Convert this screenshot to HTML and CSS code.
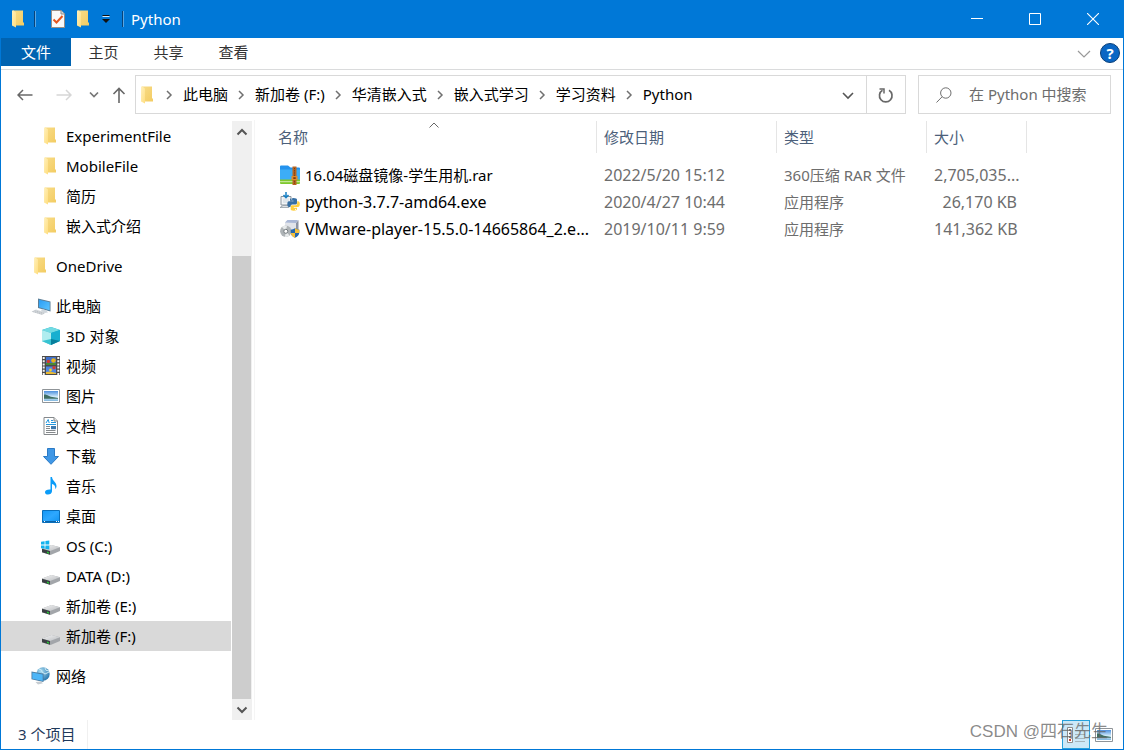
FILE: index.html
```html
<!DOCTYPE html>
<html lang="zh-CN">
<head>
<meta charset="utf-8">
<title>Python</title>
<link rel="stylesheet" href="styles.css">
</head>
<body>
<svg class="defs" aria-hidden="true">
  <defs>
    <linearGradient id="g-folder" x1="0" y1="0" x2="1" y2="1"><stop offset="0" stop-color="#f8dc88"/><stop offset="1" stop-color="#f3cc62"/></linearGradient>
    <linearGradient id="g-flap" x1="0" y1="0" x2="1" y2="1"><stop offset="0" stop-color="#fff0bd"/><stop offset="1" stop-color="#ffde7e"/></linearGradient>
    <linearGradient id="g-screen" x1="0" y1="0" x2="1" y2="1"><stop offset="0" stop-color="#2a9df4"/><stop offset="1" stop-color="#5cc4ff"/></linearGradient>
    <linearGradient id="g-drive" x1="0" y1="0" x2="1" y2="1"><stop offset="0" stop-color="#f4f4f4"/><stop offset="1" stop-color="#b9bcc0"/></linearGradient>
    <linearGradient id="g-photo" x1="0" y1="0" x2="0" y2="1"><stop offset="0" stop-color="#4c8fdd"/><stop offset=".6" stop-color="#d9effb"/><stop offset="1" stop-color="#7fb6df"/></linearGradient>
    <linearGradient id="g-desk" x1="0" y1="0" x2="1" y2="1"><stop offset="0" stop-color="#1397f5"/><stop offset=".5" stop-color="#2ea8ff"/><stop offset="1" stop-color="#0f92f0"/></linearGradient>
    <radialGradient id="g-globe" cx=".35" cy=".3" r=".8"><stop offset="0" stop-color="#a9dcf2"/><stop offset="1" stop-color="#1f6fa8"/></radialGradient>
  </defs>
  <symbol id="folder" viewBox="0 0 18 18">
    <path d="M4 0.5H14V12.5H15V15.5H4Z" fill="url(#g-folder)"/>
    <path d="M3 0.5H4.5L7 2.5V17.5L3 15.5Z" fill="url(#g-flap)"/>
  </symbol>
  <symbol id="pc" viewBox="0 0 20 18">
    <path d="M7 0.5L19.5 3.5V13.5L7 10Z" fill="#5b7d96"/>
    <path d="M8 1.7L18.7 4.2V12.2L8 9.2Z" fill="url(#g-screen)"/>
    <path d="M11 11L15 12.2L17 14.5L13 15L10 13Z" fill="#cfd6dc"/>
    <path d="M0.5 13.5L5 11.5L15 14.5L11 17Z" fill="#d5d9dd"/>
    <path d="M1.5 13.6L11.5 16.2M3.5 12.7L13 15.3" stroke="#a9b0b6" stroke-width=".6" stroke-dasharray="1.5 .6"/>
  </symbol>
  <symbol id="cube" viewBox="0 0 18 18">
    <path d="M9 0L18 3V14L9 18L0 14V3Z" fill="#19a9c6"/>
    <path d="M9 0L18 3L9 6L0 3Z" fill="#72dbe3"/>
    <path d="M0 3L9 6V18L0 14Z" fill="#b0edef"/>
    <path d="M0 14L9 12V18Z" fill="#37c3d1"/>
    <path d="M9 6L18 3V14L9 12Z" fill="#18afd0"/>
    <path d="M9 12L18 14L9 18Z" fill="#077f9c"/>
  </symbol>
  <symbol id="video" viewBox="0 0 18 19">
    <path d="M0 0H18V19H0Z" fill="#4b4b4b"/>
    <path d="M1.7 1V19M16.3 1V19" stroke="#f5f5f5" stroke-width="2" stroke-dasharray="2 1.2"/>
    <path d="M4 1H14V9H4Z" fill="#3f70cb"/><path d="M4 10.5H14V18H4Z" fill="#4f86e3"/>
    <circle cx="6.3" cy="5.5" r="1.8" fill="#d23c2e"/><circle cx="11.5" cy="4.5" r="2.3" fill="#e8b01d"/>
    <path d="M4 7H14V9H4Z" fill="#4b8b35"/><circle cx="12" cy="11.8" r="1.7" fill="#d23c2e"/>
    <circle cx="8.5" cy="14" r="1.4" fill="#f4cf28"/><path d="M4 16L8 15.5L14 17V18H4Z" fill="#eab932"/>
  </symbol>
  <symbol id="picture" viewBox="0 0 18 14">
    <path d="M.5 .5H17.5V13.5H.5Z" fill="#fff" stroke="#8f9498"/>
    <path d="M2 2H16V12H2Z" fill="url(#g-photo)"/>
    <path d="M2 5.5C5 5 7 8 12 8.2L16 9V9.8H2Z" fill="#3f6e62"/>
  </symbol>
  <symbol id="document" viewBox="0 0 16 18">
    <path d="M1 .5H11L14.5 4V17.5H1Z" fill="#fff" stroke="#85898c"/>
    <path d="M11 .5V4H14.5" fill="#e4e4e4" stroke="#85898c"/>
    <path d="M3 6L5.2 2.5L6.2 6M8 3.5H10M8 5.5H13M3 7.5H13" fill="none" stroke="#2296dd"/>
    <path d="M3 9.5H7M3 11.5H7M3 13.5H12.5M3 15.5H12.5" stroke="#85898c"/>
    <path d="M8 9H13V12.2H8Z" fill="#3c78ad"/>
  </symbol>
  <symbol id="download" viewBox="0 0 16 17">
    <path d="M4.5 .5H11.5V8.5H15.5L8 16.3L.5 8.5H4.5Z" fill="#3f97e6" stroke="#2b7ac5"/>
  </symbol>
  <symbol id="music" viewBox="0 0 12 18">
    <path d="M5.5 0H7C7.2 4 11.5 5 11.5 9C11.5 10.3 11 11.3 10.3 12C10.7 9 9 7.5 7 7V14.2C7 16.2 5 17.5 3 17.5C1.3 17.5 0 16.6 0 15.2C0 13.4 2.2 12.3 5.5 12.6Z" fill="#0b9cf8"/>
  </symbol>
  <symbol id="desktop" viewBox="0 0 18 13">
    <path d="M.5 .5H17.5V12.5H.5Z" fill="url(#g-desk)" stroke="#0a6fbb"/>
    <path d="M1 11.5H17" stroke="#0b62a6"/><path d="M2 11.5H3M14 11.5H15M16 11.5H17" stroke="#fff"/>
  </symbol>
  <symbol id="drive" viewBox="0 0 20 16">
    <path d="M1 8.5L10.5 5L19 7.2V11L9.5 15L1 12.3Z" fill="#a3a6aa"/>
    <path d="M1 8.5L10.5 5L19 7.2L9 11Z" fill="url(#g-drive)"/>
    <path d="M1 8.7L9 11V14.8L1 12.3Z" fill="#3b3f43"/>
    <path d="M6 11.5L8 12.2V13.7L6 13.1Z" fill="#27c934"/>
  </symbol>
  <symbol id="winlogo" viewBox="0 0 20 16">
    <path d="M0 1.7L3.6 1.2V4.6H0ZM4.4 1.1L8.3 .5V4.6H4.4ZM0 5.4H3.6V8.8L0 8.3ZM4.4 5.4H8.3V9.4L4.4 8.9Z" fill="#12b3ee"/>
  </symbol>
  <symbol id="network" viewBox="0 0 20 18">
    <circle cx="12" cy="7" r="6.7" fill="url(#g-globe)"/>
    <path d="M8 2Q12 3 11 5L14 7L18 5M14 1Q14 4 18 4" fill="none" stroke="#cdebf6" stroke-width="1"/>
    <path d="M.5 4.5L12.5 6.7V15L.5 12.3Z" fill="#47779d"/><path d="M1.3 5.4L11.7 7.4V14L1.3 11.7Z" fill="#4db6f7"/>
    <path d="M4.5 15L10 14.6L12 16.2L7 17.5Z" fill="#c6ccd1"/>
  </symbol>
  <symbol id="rar" viewBox="0 0 20 20">
    <path d="M0 1.5Q0 .5 1 .5H8L10.5 2.5H19Q20 2.5 20 3.5V18H0Z" fill="#2493ee"/>
    <path d="M0 4.5H20V15H0Z" fill="#3cadf7"/>
    <path d="M0 14.5H20V18Q20 19 19 19H1Q0 19 0 18Z" fill="#7ec82e"/>
    <path d="M0 16.7H20" stroke="#e9f5cf" stroke-width=".8"/>
    <path d="M12.5 1.5H16.5V20H12.5Z" fill="#b86420"/><path d="M14.5 3V19" stroke="#703b16" stroke-dasharray="1.2 1"/>
    <path d="M11.5 11H17.5V15H11.5Z" fill="#e08b2d"/><path d="M13.3 12.2H15.7V14H13.3Z" fill="#7a3b12"/>
  </symbol>
  <symbol id="pyexe" viewBox="0 0 20 20">
    <path d="M1 4.5H11V13H1Z" fill="#f2f4f6" stroke="#8a949d"/><path d="M3 6.5H9V11H3Z" fill="#dfe5ea"/>
    <path d="M0 15.5L3 13.5H9V15.5Z" fill="#dfe2e5" stroke="#8a949d" stroke-width=".7"/>
    <path d="M6 0V5.5M3.5 3L6 5.7L8.5 3" fill="none" stroke="#167fc3" stroke-width="1.5"/>
    <path d="M10 7.5Q10 6 13.5 6T17 7.7V11Q17 12.5 15.5 12.5H11.5Q10.5 12.5 10.5 15H9Q7.3 15 7.3 12T9 9.3H13.5V8.7H10Z" fill="#376fa3"/>
    <path d="M17.2 9.3H18Q19.8 9.3 19.8 12.3T18 15H13.8V15.7H17V17Q17 18.7 13.7 18.7T10.7 17V14.4Q10.7 13.2 12 13.2H15.5Q17.2 13.2 17.2 11Z" fill="#ffcf3e"/>
    <path d="M11.2 7H12.2M15 17.4H16" stroke="#fff"/>
  </symbol>
  <symbol id="setup" viewBox="0 0 20 20">
    <path d="M5 3.5L7.5 1H18L16 4V14H5Z" fill="#e1e4ea"/><path d="M16 4L18.5 1V14H16Z" fill="#8b93a3"/><path d="M5 3.5L7.5 1H18L16 4Z" fill="#aab8d6"/>
    <circle cx="5.8" cy="12.3" r="5.7" fill="#aeb3b6"/><path d="M5.8 12.3L2 8.1A5.7 5.7 0 0 1 7 6.7ZM5.8 12.3L9.5 16.6A5.7 5.7 0 0 1 5 17.9Z" fill="#e8ebec"/>
    <circle cx="5.8" cy="12.3" r="2" fill="#fff" stroke="#737a7e"/>
    <path d="M15 9.3Q16.7 10.7 19.3 10.7V13.2Q19.3 17 15 18.8Q10.7 17 10.7 13.2V10.7Q13.3 10.7 15 9.3Z" fill="#2466ad"/>
    <path d="M15 9.3Q16.7 10.7 19.3 10.7V14H15ZM10.8 14H15V18.8Q11.2 17.2 10.8 14Z" fill="#f4bf3b"/>
  </symbol>
  <symbol id="sep-chev" viewBox="0 0 16 16"><path d="M6 4L10 8L6 12" fill="none" stroke="#707070" stroke-width="1.5"/></symbol>
  <symbol id="down" viewBox="0 0 16 16"><path d="M3 6L8 11L13 6" fill="none" stroke="currentColor" stroke-width="1.6"/></symbol>
</svg>

<div class="window">
  <header class="titlebar">
    <svg class="i18"><use href="#folder"/></svg>
    <span class="tsep"></span>
    <button class="quick props" aria-label="属性"><svg width="14" height="18" viewBox="0 0 14 18"><path d="M.5 .5H10L13.5 4V17.5H.5Z" fill="#fafafa" stroke="#9b8e86"/><path d="M10 .5V4H13.5" fill="#ddd" stroke="#8b8b8b"/><path d="M2.5 9.5L5.5 12.5L11.5 6" fill="none" stroke="#e6551e" stroke-width="2"/></svg></button>
    <button class="quick" aria-label="新建文件夹"><svg class="i18"><use href="#folder"/></svg></button>
    <button class="quick" aria-label="自定义快速访问工具栏"><svg width="8" height="8" viewBox="0 0 8 8"><path d="M.5 .5H7.5" stroke="#111"/><path d="M.5 1.5H7.5" stroke="#d7e8f7"/><path d="M0 4H8L4 8Z" fill="#111"/></svg></button>
    <span class="tsep"></span>
    <h1 class="title">Python</h1>
    <div class="controls">
      <button aria-label="最小化"><svg width="12" height="12"><path d="M0 5.5H12" stroke="#fff"/></svg></button>
      <button aria-label="最大化"><svg width="12" height="12"><path d="M.5 .5H11.5V11.5H.5Z" fill="none" stroke="#fff"/></svg></button>
      <button aria-label="关闭"><svg width="12" height="12"><path d="M0 0L12 12M12 0L0 12" stroke="#fff" stroke-width="1.1"/></svg></button>
    </div>
  </header>

  <nav class="ribbon" aria-label="功能区">
    <button class="tab file">文件</button>
    <button class="tab">主页</button>
    <button class="tab">共享</button>
    <button class="tab">查看</button>
    <span class="grow"></span>
    <button class="expand" aria-label="展开功能区"><svg width="14" height="8"><path d="M1 1L7 7L13 1" fill="none" stroke="#999" stroke-width="1.2"/></svg></button>
    <button class="help" aria-label="帮助">?</button>
  </nav>

  <div class="addressrow">
    <div class="navbtns">
      <button aria-label="后退"><svg width="16" height="16"><path d="M1 8H15.5M6 3L1 8L6 13" fill="none" stroke="#686868" stroke-width="1.5"/></svg></button>
      <button aria-label="前进" disabled><svg width="16" height="16"><path d="M.5 8H15M10 3L15 8L10 13" fill="none" stroke="#d6d6d6" stroke-width="1.5"/></svg></button>
      <button class="recent" aria-label="最近浏览的位置"><svg width="10" height="8"><path d="M1 1.5L5 5.5L9 1.5" fill="none" stroke="#777" stroke-width="1.7"/></svg></button>
      <button class="up" aria-label="上移"><svg width="14" height="16"><path d="M7 16V1.5M1.5 7L7 1.5L12.5 7" fill="none" stroke="#686868" stroke-width="1.6"/></svg></button>
    </div>
    <div class="address">
      <svg class="i18"><use href="#folder"/></svg>
      <svg class="chev"><use href="#sep-chev"/></svg><button class="crumb">此电脑</button>
      <svg class="chev"><use href="#sep-chev"/></svg><button class="crumb">新加卷 (F:)</button>
      <svg class="chev"><use href="#sep-chev"/></svg><button class="crumb">华清嵌入式</button>
      <svg class="chev"><use href="#sep-chev"/></svg><button class="crumb">嵌入式学习</button>
      <svg class="chev"><use href="#sep-chev"/></svg><button class="crumb">学习资料</button>
      <svg class="chev"><use href="#sep-chev"/></svg><button class="crumb">Python</button>
      <span class="grow"></span>
      <button class="drop" aria-label="以前的位置"><svg width="16" height="16"><use href="#down"/></svg></button>
      <button class="refresh" aria-label="刷新"><svg width="16" height="16"><path d="M11 3.2A6.3 6.3 0 1 1 4.5 3.2" fill="none" stroke="#686868" stroke-width="1.7"/><path d="M1.5 2H6V6.5" fill="none" stroke="#686868" stroke-width="1.5"/></svg></button>
    </div>
    <label class="search">
      <svg width="16" height="16"><circle cx="9.8" cy="6" r="5.2" fill="none" stroke="#707070"/><path d="M6.2 9.7L.5 15.5" stroke="#707070"/></svg>
      <input type="text" placeholder="在 Python 中搜索" aria-label="在 Python 中搜索">
    </label>
  </div>

  <div class="body">
    <aside class="tree">
      <ul>
        <li class="sub"><a href="#"><svg class="ic"><use href="#folder" y="1" width="18" height="18"/></svg>ExperimentFile</a></li>
        <li class="sub"><a href="#"><svg class="ic"><use href="#folder" y="1" width="18" height="18"/></svg>MobileFile</a></li>
        <li class="sub"><a href="#"><svg class="ic"><use href="#folder" y="1" width="18" height="18"/></svg>简历</a></li>
        <li class="sub"><a href="#"><svg class="ic"><use href="#folder" y="1" width="18" height="18"/></svg>嵌入式介绍</a></li>
        <li class="group"><a href="#"><svg class="ic"><use href="#folder" y="1" width="18" height="18"/></svg>OneDrive</a></li>
        <li class="group"><a href="#"><svg class="ic"><use href="#pc" y="2" width="20" height="18"/></svg>此电脑</a></li>
        <li class="sub"><a href="#"><svg class="ic"><use href="#cube" x="1" y="1" width="18" height="18"/></svg>3D 对象</a></li>
        <li class="sub"><a href="#"><svg class="ic"><use href="#video" x="1" width="18" height="19"/></svg>视频</a></li>
        <li class="sub"><a href="#"><svg class="ic"><use href="#picture" x="1" y="3" width="18" height="14"/></svg>图片</a></li>
        <li class="sub"><a href="#"><svg class="ic"><use href="#document" x="2" y="1" width="16" height="18"/></svg>文档</a></li>
        <li class="sub"><a href="#"><svg class="ic"><use href="#download" x="2" y="2" width="16" height="17"/></svg>下载</a></li>
        <li class="sub"><a href="#"><svg class="ic"><use href="#music" x="4" y="1" width="12" height="18"/></svg>音乐</a></li>
        <li class="sub"><a href="#"><svg class="ic"><use href="#desktop" x="1" y="4" width="18" height="13"/></svg>桌面</a></li>
        <li class="sub"><a href="#"><svg class="ic"><use href="#drive" y="4" width="20" height="16"/><use href="#winlogo" y="4" width="20" height="16"/></svg>OS (C:)</a></li>
        <li class="sub"><a href="#"><svg class="ic"><use href="#drive" y="4" width="20" height="16"/></svg>DATA (D:)</a></li>
        <li class="sub"><a href="#"><svg class="ic"><use href="#drive" y="4" width="20" height="16"/></svg>新加卷 (E:)</a></li>
        <li class="sub selected"><a href="#" aria-current="true"><svg class="ic"><use href="#drive" y="4" width="20" height="16"/></svg>新加卷 (F:)</a></li>
        <li class="group"><a href="#"><svg class="ic"><use href="#network" y="1" width="20" height="18"/></svg>网络</a></li>
      </ul>
    </aside>
    <div class="scrollbar">
      <button aria-label="向上滚动"><svg width="12" height="8"><path d="M1.5 6.5L6 2L10.5 6.5" fill="none" stroke="#555" stroke-width="2"/></svg></button>
      <div class="track"><div class="thumb"></div></div>
      <button aria-label="向下滚动"><svg width="12" height="8"><path d="M1.5 1.5L6 6L10.5 1.5" fill="none" stroke="#555" stroke-width="2"/></svg></button>
    </div>
    <main class="files">
      <table>
        <colgroup><col class="c-name"><col class="c-date"><col class="c-type"><col class="c-size"></colgroup>
        <thead>
          <tr><th><svg class="sort" width="10" height="6"><path d="M.5 5.5L5 1L9.5 5.5" fill="none" stroke="#666"/></svg>名称</th><th>修改日期</th><th>类型</th><th>大小</th></tr>
        </thead>
        <tbody>
          <tr><td><div class="fname"><svg class="ic"><use href="#rar" width="20" height="20"/></svg><span>16.04磁盘镜像-学生用机.rar</span></div></td><td class="latin">2022/5/20 15:12</td><td>360压缩 RAR 文件</td><td class="latin size">2,705,035...</td></tr>
          <tr><td><div class="fname latin"><svg class="ic"><use href="#pyexe" width="20" height="20"/></svg><span>python-3.7.7-amd64.exe</span></div></td><td class="latin">2020/4/27 10:44</td><td>应用程序</td><td class="latin size">26,170 KB</td></tr>
          <tr><td><div class="fname latin"><svg class="ic"><use href="#setup" width="20" height="20"/></svg><span>VMware-player-15.5.0-14665864_2.e...</span></div></td><td class="latin">2019/10/11 9:59</td><td>应用程序</td><td class="latin size">141,362 KB</td></tr>
        </tbody>
      </table>
    </main>
  </div>

  <footer class="status">
    <span class="count">3 个项目</span>
    <span class="grow"></span>
    <button class="view active" aria-label="详细信息"><svg width="20" height="18"><path d="M1.5 1.5H6.5V16.5H1.5Z" fill="#fff" stroke="#8c8c8c"/><path d="M3 4H5M3 7.5H5M3 11H5" stroke="#555" stroke-width="1.5"/><path d="M3 14H5" stroke="#c43" stroke-width="2"/><path d="M9 4.5H19M9 8.5H19M9 12.5H19M9 15.5H19" stroke="#a5b4bb"/></svg></button>
    <button class="view" aria-label="大缩略图"><svg width="18" height="14"><use href="#picture"/></svg></button>
    <span class="watermark">CSDN @四石先生</span>
  </footer>
</div>
</body>
</html>
```
FILE: styles.css
```css
* { box-sizing: border-box; }
body {
  margin: 0;
  font: 15px/20px "Noto Sans", "Noto Sans CJK SC", sans-serif;
  color: #000;
  background: #fff;
}
button {
  display: flex;
  align-items: center;
  justify-content: center;
  padding: 0;
  border: 0;
  background: none;
  color: inherit;
  font: inherit;
}
svg { display: block; flex: none; }
.defs { position: absolute; width: 0; height: 0; }
.i18 { width: 18px; height: 18px; }
.ic { width: 20px; height: 20px; }
.grow { flex: 1; }

.window {
  display: flex;
  flex-direction: column;
  min-height: 100vh;
  border: 1px solid #0078d7;
  border-top: 0;
}

.titlebar {
  display: flex;
  align-items: center;
  height: 38px;
  padding: 0 1px 0 8px;
  background: #0078d7;
  color: #fff;
}
.tsep { width: 2px; height: 16px; margin: 0 7px; border-left: 1px solid #07437a; border-right: 1px solid #5aa6e2; }
.quick { margin: 0 5px; }
.quick.props { margin: 0 4px 0 8px; }
.title { margin: 0; font-size: 15px; font-weight: 400; }
.controls { display: flex; align-self: stretch; margin-left: auto; }
.controls button { width: 58px; }

.ribbon {
  display: flex;
  align-items: stretch;
  height: 32px;
  border-bottom: 1px solid #dadbdc;
  color: #333;
}
.tab { width: 65px; height: 28px; }
.tab.file { width: 70px; background: #0063b1; color: #fff; }
.expand { width: 30px; }
.help {
  width: 20px;
  height: 20px;
  margin: 5px 3px 0 1px;
  border: 1px solid #0a3f78;
  border-radius: 50%;
  background: #0a66c4;
  color: #fff;
  font-weight: 700;
}

.addressrow { display: flex; height: 50px; padding: 5px 12px 6px 8px; }
.navbtns { display: flex; width: 126px; }
.navbtns button { width: 32px; margin-right: 7px; }
.navbtns .recent { width: 14px; }
.navbtns .up { width: 22px; margin: 0; }
.address {
  display: flex;
  flex: 1;
  align-items: center;
  border: 1px solid #d9d9d9;
  padding-left: 2px;
}
.chev { width: 16px; height: 16px; margin: 0 6px 0 5px; }
.crumb { padding-bottom: 2px; white-space: nowrap; }
.drop { width: 36px; height: 100%; color: #555; }
.refresh { width: 39px; height: 100%; border-left: 1px solid #d9d9d9; }
.search {
  display: flex;
  align-items: center;
  width: 193px;
  margin-left: 12px;
  padding-left: 17px;
  border: 1px solid #d9d9d9;
}
.search input {
  flex: 1;
  min-width: 0;
  margin-left: 17px;
  padding: 0 0 2px;
  border: 0;
  outline: 0;
  background: none;
  font: inherit;
}
.search input::placeholder { color: #6d6d6d; opacity: 1; }

.body { display: flex; flex: 1; }
.tree { width: 230px; padding-top: 1px; }
.tree ul { margin: 0; padding: 0; list-style: none; }
.tree a {
  display: flex;
  align-items: center;
  gap: 5px;
  height: 30px;
  padding-left: 30px;
  color: #000;
  text-decoration: none;
  white-space: nowrap;
}
.tree .sub a { padding-left: 40px; }
.tree .group { margin: 10px 0 0; }
.selected { background: #d9d9d9; }

.scrollbar {
  display: flex;
  flex-direction: column;
  width: 20px;
  margin: 1px 2px 0 1px;
  background: #f0f0f0;
}
.scrollbar button { height: 21px; }
.track { display: flex; flex: 1; align-items: flex-end; }
.thumb { width: 19px; height: 79.5%; background: #cdcdcd; }

.files { flex: 1; min-width: 0; padding-top: 1px; border-left: 1px solid #f5f5f5; padding-left: 16px; }
table { table-layout: fixed; width: 756px; border-collapse: separate; border-spacing: 0; }
.c-name { width: 326px; }
.c-date { width: 180px; }
.c-type { width: 150px; }
.c-size { width: 100px; }
th {
  position: relative;
  height: 32px;
  padding: 0 7px 1px;
  border-right: 1px solid #e5e5e5;
  color: #4c607a;
  font-weight: 400;
  text-align: left;
}
.sort { position: absolute; left: calc(50% - 5px); top: 1px; }
thead::after { content: ""; display: block; height: 8px; }
td { height: 27px; padding: 0 7px; color: #6d6d6d; white-space: nowrap; }
.fname { display: flex; align-items: center; gap: 5px; padding-left: 2px; color: #000; }
.latin { font-size: 16px; }
.size { padding-right: 10px; text-align: right; }

.status {
  position: relative;
  display: flex;
  align-items: stretch;
  height: 29px;
  padding-right: 5px;
}
.count { padding: 4px 12px 5px 17px; color: #1e395b; border-right: 1px solid #f0f0f0; }
.view { width: 28px; }
.view.active { border: 1px solid #26a0da; background: #cce8f7; }
.watermark {
  position: absolute;
  right: 15px;
  top: 0;
  color: rgba(100, 100, 100, 0.75);
  font: 17px/24px "Liberation Sans", "Noto Sans CJK SC", sans-serif;
}
```
